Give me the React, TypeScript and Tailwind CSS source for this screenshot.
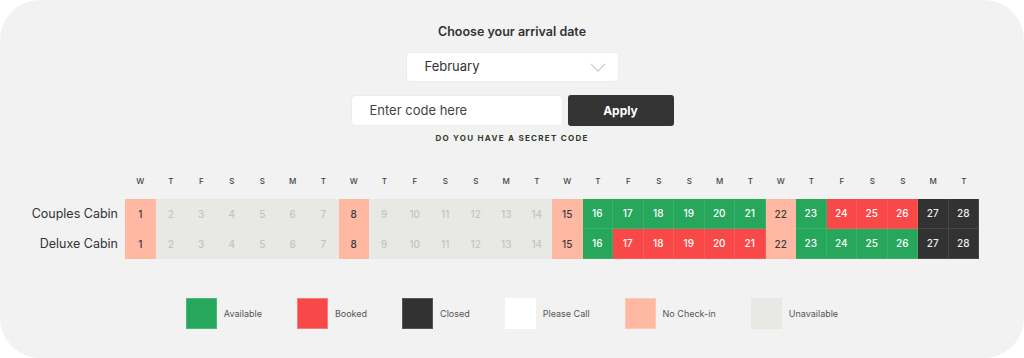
import React from "react";

type S = "n" | "u" | "a" | "b" | "c";

const days = ["W", "T", "F", "S", "S", "M", "T"];

function build(overrides: Record<number, S>): S[] {
  const arr: S[] = [];
  for (let d = 1; d <= 28; d++) {
    if (overrides[d]) arr.push(overrides[d]);
    else if (d % 7 === 1) arr.push("n");
    else if (d <= 14) arr.push("u");
    else arr.push("a");
  }
  return arr;
}

const couples = build({ 24: "b", 25: "b", 26: "b", 27: "c", 28: "c" });
const deluxe = build({ 17: "b", 18: "b", 19: "b", 20: "b", 21: "b", 27: "c", 28: "c" });

const cellCls: Record<S, string> = {
  n: "bg-[#ffb9a3] text-[#3a3a3a]",
  u: "bg-[#e8e9e4] text-[#c4c4c2]",
  a: "bg-[#27a75c] text-white border-r border-b border-white/10",
  b: "bg-[#f94848] text-white border-r border-b border-white/10",
  c: "bg-[#323232] text-[#eeeeee] border-r border-b border-white/10",
};

function Row({ label, data }: { label: string; data: S[] }) {
  return (
    <div className="flex items-center h-[30px]">
      <div className="w-[118px] text-right text-[12.5px] text-[#333]">{label}</div>
      <div className="ml-[7px] flex">
        {data.map((s, i) => (
          <div
            key={i}
            className={`w-[30.5px] h-[30px] flex items-center justify-center text-[10px] font-medium ${cellCls[s]}`}
          >
            {i + 1}
          </div>
        ))}
      </div>
    </div>
  );
}

const legend = [
  { label: "Available", cls: "bg-[#27a75c] border border-[#4cb878]" },
  { label: "Booked", cls: "bg-[#f94848] border border-[#fb7a7a]" },
  { label: "Closed", cls: "bg-[#323232] border border-[#555]" },
  { label: "Please Call", cls: "bg-white" },
  { label: "No Check-in", cls: "bg-[#ffb9a3] border border-[#ffc9b8]" },
  { label: "Unavailable", cls: "bg-[#e8e9e4]" },
];

export default function App() {
  return (
    <div className="w-[1024px] h-[358px] bg-white" style={{ fontFamily: "Inter, 'Noto Sans', sans-serif" }}>
      <div className="w-full h-full rounded-[40px] bg-[#f2f2f2] flex flex-col items-center pt-[24px]">
        <div className="text-[12.5px] leading-[16px] font-semibold text-[#333]">Choose your arrival date</div>
        <div className="mt-[12px] w-[213px] h-[30px] rounded-[4px] bg-white border border-[#ececec] flex items-center justify-between pl-[18px] pr-[12px] text-[13px] text-[#333]">
          <span>February</span>
          <svg width="16" height="9" viewBox="0 0 16 9" fill="none">
            <path d="M1 1l7 7 7-7" stroke="#cfcfcf" strokeWidth="1.3" />
          </svg>
        </div>
        <div className="mt-[13px] flex">
          <div className="w-[212px] h-[31px] rounded-[4px] bg-white border border-[#ececec] flex items-center pl-[18px] text-[13px] text-[#444]">
            Enter code here
          </div>
          <div className="ml-[5px] w-[106px] h-[31px] rounded-[3px] bg-[#333] flex items-center justify-center text-[12px] font-bold text-white">
            Apply
          </div>
        </div>
        <div className="mt-[7px] text-[8px] leading-[10px] font-bold tracking-[0.16em] text-[#2f3b27]">
          DO YOU HAVE A SECRET CODE
        </div>
        <div className="self-stretch mt-[28px] flex flex-col">
          <div className="flex h-[20px] items-center">
            <div className="w-[118px]" />
            <div className="ml-[7px] flex">
              {Array.from({ length: 28 }).map((_, i) => (
                <div key={i} className="w-[30.5px] text-center text-[8px] font-medium text-[#444]">
                  {days[i % 7]}
                </div>
              ))}
            </div>
          </div>
          <div className="mt-[8px]">
            <Row label="Couples Cabin" data={couples} />
            <Row label="Deluxe Cabin" data={deluxe} />
          </div>
        </div>
        <div className="mt-[39px] flex items-center gap-[35px]">
          {legend.map((l) => (
            <div key={l.label} className="flex items-center gap-[7px]">
              <div className={`w-[31px] h-[31px] ${l.cls}`} />
              <span className="text-[9px] text-[#555]">{l.label}</span>
            </div>
          ))}
        </div>
      </div>
    </div>
  );
}
